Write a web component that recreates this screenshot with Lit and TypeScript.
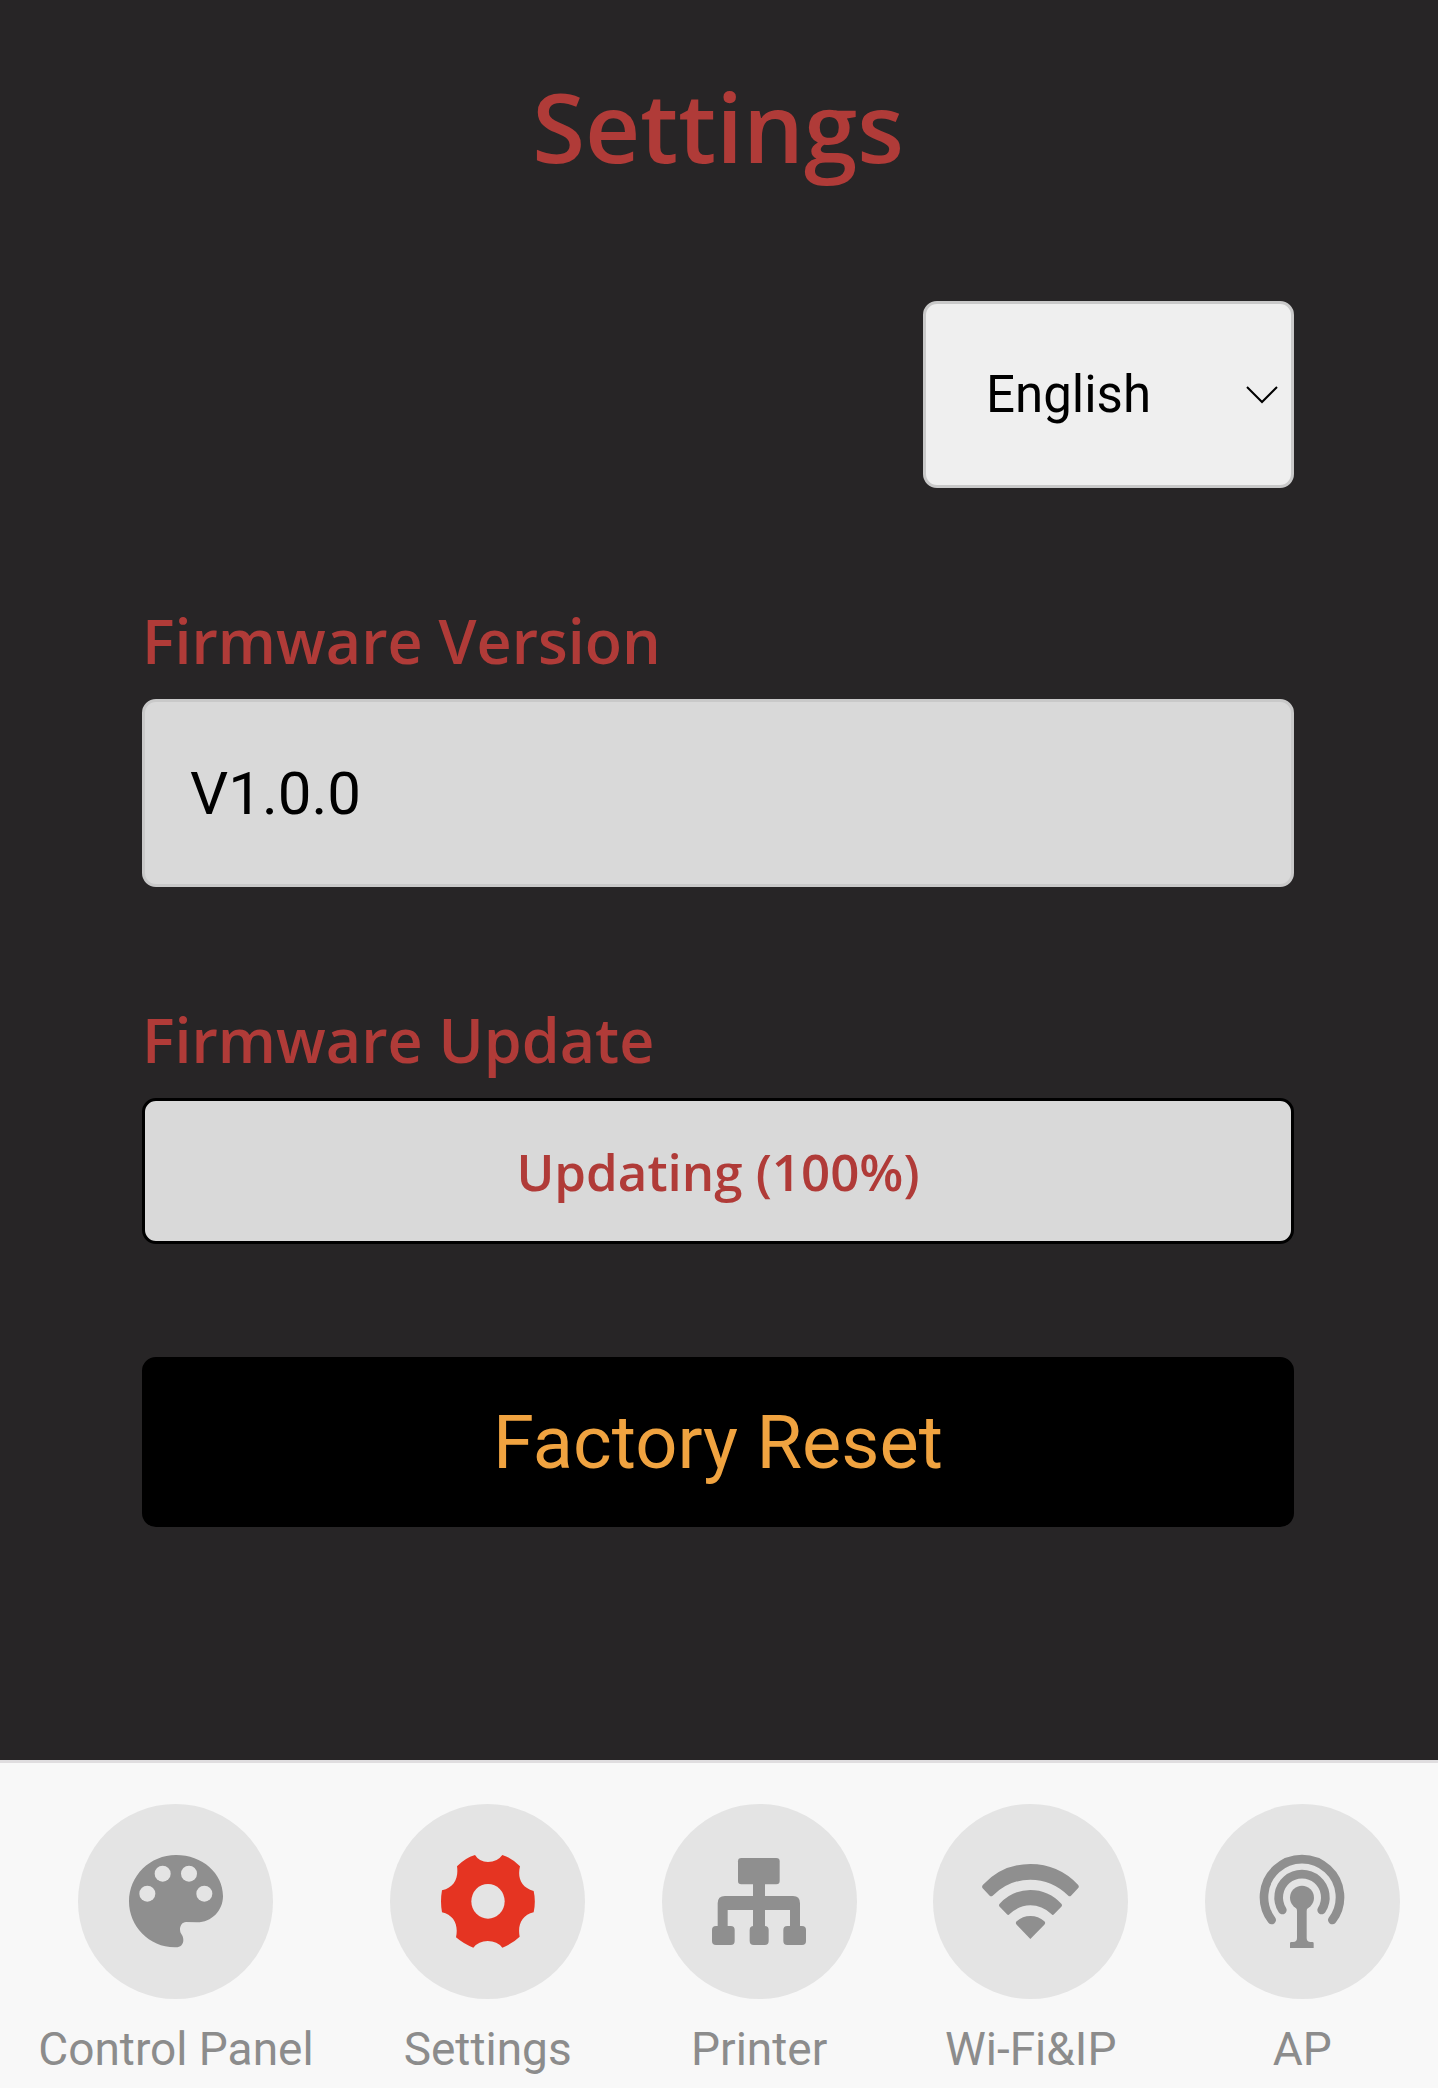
import { LitElement, html, css, svg, type SVGTemplateResult } from "lit";
import { customElement, property, state } from "lit/decorators.js";
import { classMap } from "lit/directives/class-map.js";

interface NavItem {
  id: string;
  label: string;
  viewBox: string;
  icon: SVGTemplateResult;
}

const NAV_ITEMS: NavItem[] = [
  {
    id: "control",
    label: "Control Panel",
    viewBox: "51 42 585 585",
    icon: svg`
      <path d="M345 195C424 195 486 250 486 318C486 362 452 397 408 397L375 396C364 396 357 407 357 418C357 434 367 434 367 450C367 464 358 472 345 472C266 474 204 410 204 334C204 257 267 195 345 195Z"/>
      <g class="hole">
        <circle cx="259" cy="311" r="24"/><circle cx="305" cy="251" r="24"/>
        <circle cx="384" cy="251" r="24"/><circle cx="430" cy="311" r="24"/>
      </g>`,
  },
  {
    id: "settings",
    label: "Settings",
    viewBox: "60 42 585 585",
    icon: svg`
      <path d="M315 195Q328 216 354 216Q382 216 397 195Q426 204 450 229C442 262 452 292 491 303Q498 334 491 367C456 375 442 405 449 440Q426 462 397 473Q382 453 353 453Q326 453 310 473Q281 462 258 442C266 405 252 375 216 367Q210 334 216 301C254 292 266 262 261 229Q285 204 315 195Z"/>
      <ellipse class="hole" cx="354" cy="334" rx="50" ry="52"/>`,
  },
  {
    id: "printer",
    label: "Printer",
    viewBox: "36 42 585 585",
    icon: svg`
      <rect x="264" y="204" width="125" height="79" rx="10"/>
      <rect x="309" y="280" width="36" height="132"/>
      <path d="M203 412V340Q203 318 225 318H429Q450 318 450 340V412H420V360H233V412Z"/>
      <rect x="186" y="408" width="68" height="57" rx="12"/>
      <rect x="299" y="408" width="57" height="57" rx="12"/>
      <rect x="400" y="408" width="68" height="57" rx="12"/>`,
  },
  {
    id: "wifi",
    label: "Wi-Fi&IP",
    viewBox: "39 42 585 585",
    icon: svg`
      <path d="M189 284Q248 222 331 222Q415 222 474 284Q479 290 474 295L453 317Q449 321 445 317Q396 269 331 269Q267 269 218 317Q213 321 209 317L188 295Q184 290 189 284Z"/>
      <path d="M239 341Q278 300 331 300Q385 300 424 341Q428 346 424 350L402 373Q398 377 394 372Q366 346 331 346Q297 346 269 372Q265 377 261 373L239 350Q235 346 239 341Z"/>
      <path d="M290 394Q308 378 331 378Q355 378 373 394Q378 399 373 404L331 447L290 404Q285 399 290 394Z"/>`,
  },
  {
    id: "ap",
    label: "AP",
    viewBox: "45 42 585 585",
    icon: svg`
      <path class="wave" d="M245 390A114 114 0 1 1 427 390"/>
      <path class="wave" d="M277 360A70 70 0 1 1 395 360"/>
      <circle cx="336" cy="323" r="36"/>
      <path d="M312 348Q321 352 321 364V444Q321 456 309 456H304Q300 456 300 460V474H371V460Q371 456 367 456H362Q350 456 350 444V364Q350 352 360 348Z"/>`,
  },
];

@customElement("nav-bar")
export class NavBar extends LitElement {
  @property() current = "settings";

  static styles = css`
    :host { display: block; }
    nav {
      display: flex;
      justify-content: space-around;
      padding: 41px 0 11px;
      border-top: 3px solid #dfdddf;
      background: #f8f8f8;
    }
    .item {
      display: flex;
      flex-direction: column;
      align-items: center;
      gap: 22px;
      color: #8c8c8c;
      font-size: 46px;
      line-height: 56px;
      text-decoration: none;
      white-space: nowrap;
    }
    .disc {
      width: 195px;
      height: 195px;
      border-radius: 50%;
      background: #e4e4e4;
      fill: #8f8f8f;
    }
    .active .disc { fill: #e53422; }
    .hole { fill: #e4e4e4; }
    .wave { fill: none; stroke: #8f8f8f; stroke-width: 26; stroke-linecap: round; }
  `;

  render() {
    return html`<nav aria-label="Main">
      ${NAV_ITEMS.map(
        (item) => html`<a
          class=${classMap({ item: true, active: item.id === this.current })}
          href="#${item.id}"
        >
          <svg class="disc" viewBox=${item.viewBox} aria-hidden="true">${item.icon}</svg>
          <span>${item.label}</span>
        </a>`
      )}
    </nav>`;
  }
}

@customElement("app-root")
export class AppRoot extends LitElement {
  @state() private version = "V1.0.0";
  @state() private progress = 100;

  static styles = css`
    :host {
      display: flex;
      flex-direction: column;
      min-height: 100vh;
      background: #272526;
      font-family: Roboto, "Liberation Sans", sans-serif;
    }
    * { box-sizing: border-box; }
    main {
      flex: 1;
      display: flex;
      flex-direction: column;
      padding: 62px 144px 110px 142px;
    }
    h1, .heading {
      margin: 0;
      color: #b03b38;
      font-family: "Open Sans", sans-serif;
      font-weight: 600;
    }
    h1 { font-size: 96px; line-height: 128px; text-align: center; }
    .language {
      display: grid;
      align-self: flex-end;
      align-items: center;
      margin-top: 111px;
    }
    .language > * { grid-area: 1 / 1; }
    select, input, button {
      border: 3px solid #c9c9c9;
      border-radius: 14px;
      margin: 0;
      font-family: inherit;
      color: #000;
    }
    select {
      appearance: none;
      width: 371px;
      height: 187px;
      padding: 0 60px;
      background: #efefef;
      font-size: 51px;
    }
    .chevron {
      justify-self: end;
      width: 34px;
      height: 20px;
      margin-right: 15px;
      fill: none;
      stroke: #000;
      stroke-width: 2;
      pointer-events: none;
    }
    .heading {
      display: block;
      margin: 111px 0 16px;
      font-size: 61px;
      line-height: 84px;
    }
    input {
      width: 100%;
      height: 188px;
      padding: 0 45px;
      background: #d9d9d9;
      font-size: 60px;
    }
    .update {
      height: 146px;
      border-color: #000;
      background: #d9d9d9;
      color: #b03b38;
      font-family: "Open Sans", sans-serif;
      font-size: 51px;
      font-weight: 600;
    }
    .reset {
      height: 170px;
      margin-top: 113px;
      border-color: #000;
      background: #000;
      color: #f0a340;
      font-size: 74px;
    }
  `;

  render() {
    return html`
      <main>
        <h1>Settings</h1>
        <div class="language">
          <select aria-label="Language">
            <option selected>English</option>
          </select>
          <svg class="chevron" viewBox="0 0 34 20" aria-hidden="true">
            <path d="M2 2L17 17L32 2" />
          </svg>
        </div>
        <label class="heading" for="version">Firmware Version</label>
        <input id="version" type="text" readonly .value=${this.version} />
        <label class="heading" for="update">Firmware Update</label>
        <button id="update" class="update" type="button">Updating (${this.progress}%)</button>
        <button class="reset" type="button">Factory Reset</button>
      </main>
      <nav-bar current="settings"></nav-bar>
    `;
  }
}
